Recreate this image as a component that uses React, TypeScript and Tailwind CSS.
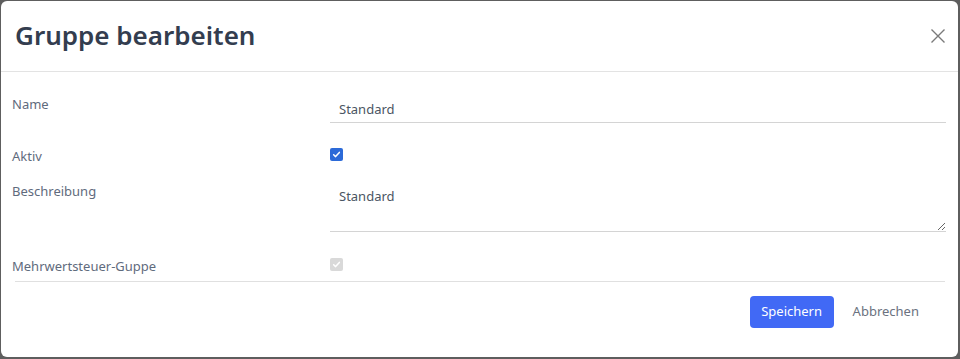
import React from "react"

const font = { fontFamily: '"Noto Sans", "Open Sans", sans-serif' }

const CheckBox = ({ disabled }: { disabled?: boolean }) => (
  <span
    className={`mt-[2px] flex h-[13px] w-[13px] items-center justify-center rounded-[2px] ${
      disabled ? "bg-[#d9d9d9]" : "bg-[#2c6ad8]"
    }`}
  >
    <svg viewBox="0 0 12 12" className="h-[9px] w-[9px]" fill="none" stroke="white" strokeWidth="2" strokeLinecap="round" strokeLinejoin="round">
      <path d="M2.2 6.3 L4.8 8.8 L9.8 3.2" />
    </svg>
  </span>
)

export default function App() {
  return (
    <div className="h-[359px] w-[960px] bg-[#5e5e5e] pb-[2px] pl-px pr-[2px] pt-px" style={font}>
      <div className="flex h-full flex-col rounded-md bg-white">
        {/* Header */}
        <div className="flex h-[71px] items-center justify-between border-b border-[#e3e3e3] pl-[14px] pr-[12px]">
          <h2 className="pb-[1px] text-[26px] font-semibold text-[#333d4f]">Gruppe bearbeiten</h2>
          <button type="button" className="text-[#7a7a7a]">
            <svg viewBox="0 0 16 16" className="h-[16px] w-[16px]" stroke="currentColor" strokeWidth="1.4" fill="none">
              <path d="M1.5 1.5 L14.5 14.5 M14.5 1.5 L1.5 14.5" />
            </svg>
          </button>
        </div>

        {/* Body */}
        <div className="pl-[11px] pr-[12px] text-[13px]">
          <div className="mt-[21px] grid grid-cols-[318px_1fr] items-start">
            <label className="pt-px leading-5 text-[#5f6b7d]">Name</label>
            <input
              readOnly
              value="Standard"
              className="h-[30px] border-b border-[#d4d4d4] pl-[9px] pt-[3px] text-[13px] text-[#4b5563] outline-none"
            />
          </div>

          <div className="mt-[23px] grid grid-cols-[318px_1fr] items-start">
            <label className="leading-5 text-[#5f6b7d]">Aktiv</label>
            <CheckBox />
          </div>

          <div className="mt-[15px] grid grid-cols-[318px_1fr] items-start">
            <label className="leading-5 text-[#5f6b7d]">Beschreibung</label>
            <textarea
              readOnly
              value="Standard"
              className="block h-[51px] border-b border-[#d4d4d4] pl-[9px] pt-[5px] text-[13px] leading-5 text-[#4b5563] outline-none"
            />
          </div>

          <div className="mt-[24px] grid grid-cols-[318px_1fr] items-start">
            <label className="leading-5 text-[#5f6b7d]">Mehrwertsteuer-Guppe</label>
            <CheckBox disabled />
          </div>
        </div>

        <div className="ml-[14px] mr-[13px] mt-[5px] border-t border-[#e0e0e0]" />

        {/* Footer */}
        <div className="mt-[14px] flex items-center justify-end pr-[20px] text-[13px]">
          <button type="button" className="h-[32px] w-[84px] rounded-[4px] bg-[#4169f5] text-white">
            Speichern
          </button>
          <button type="button" className="px-[19px] text-[#6b7280]">
            Abbrechen
          </button>
        </div>
      </div>
    </div>
  )
}
